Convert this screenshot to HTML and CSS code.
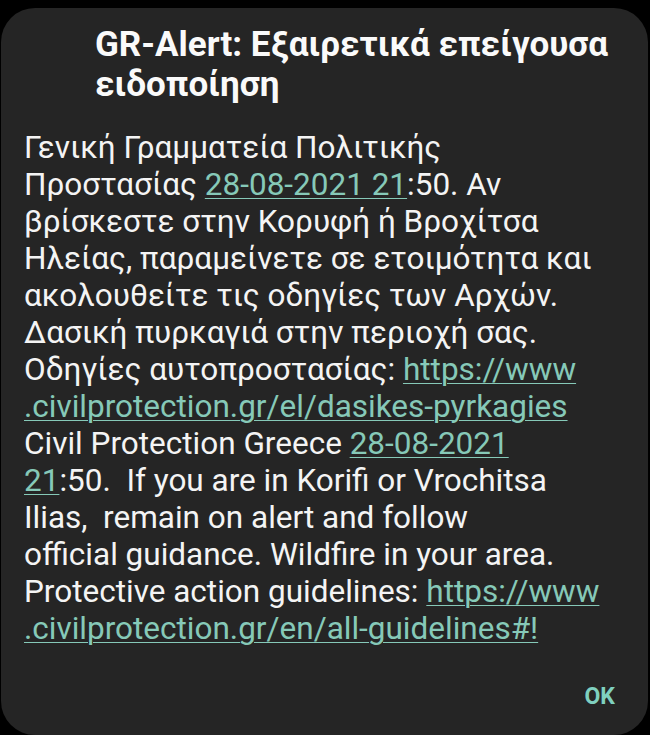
FILE: index.html
```html
<!DOCTYPE html>
<html lang="el">
<head>
<meta charset="utf-8">
<link rel="stylesheet" href="styles.css">
</head>
<body>
<div class="card">
  <h1 class="title">GR-Alert: Εξαιρετικά επείγουσα<br>ειδοποίηση</h1>
  <p class="msg">Γενική Γραμματεία Πολιτικής<br>Προστασίας <a class="lnk">28-08-2021 21</a>:50. Αν<br>βρίσκεστε στην Κορυφή ή Βροχίτσα<br>Ηλείας, παραμείνετε σε ετοιμότητα και<br>ακολουθείτε τις οδηγίες των Αρχών.<br>Δασική πυρκαγιά στην περιοχή σας.<br>Οδηγίες αυτοπροστασίας: <a class="lnk">https://www<br>.civilprotection.gr/el/dasikes-pyrkagies</a><br>Civil Protection Greece <a class="lnk">28-08-2021<br>21</a>:50.&nbsp; If you are in Korifi or Vrochitsa<br>Ilias,&nbsp; remain on alert and follow<br>official guidance. Wildfire in your area.<br>Protective action guidelines: <a class="lnk">https://www<br>.civilprotection.gr/en/all-guidelines#!</a></p>
  <div class="actions"><span class="ok">OK</span></div>
</div>
</body>
</html>
```
FILE: styles.css
```css
html, body {
  margin: 0;
  padding: 0;
  background: #000;
}
body {
  width: 650px;
  height: 735px;
  overflow: hidden;
  font-family: Roboto, "Noto Sans", sans-serif;
}
.card {
  box-sizing: border-box;
  margin: 8px 2px 0 1px;
  height: 727px;
  background: #252525;
  border-radius: 34px;
  padding: 17px 0 0 0;
  display: flex;
  flex-direction: column;
}
.title {
  margin: 0;
  padding-left: 94px;
  font-size: 35px;
  line-height: 40px;
  font-weight: 700;
  color: #fafafa;
}
.msg {
  margin: 24px 0 0 0;
  padding-left: 23px;
  font-size: 31.5px;
  line-height: 37px;
  color: #f4f4f4;
}
.lnk {
  color: #86c9b8;
  text-decoration: underline;
  text-decoration-thickness: 1px;
  text-underline-offset: 3px;
}
.actions {
  display: flex;
  justify-content: flex-end;
  padding: 36px 33px 0 0;
}
.ok {
  color: #7fd0bf;
  font-weight: 700;
  font-size: 23px;
}
```
